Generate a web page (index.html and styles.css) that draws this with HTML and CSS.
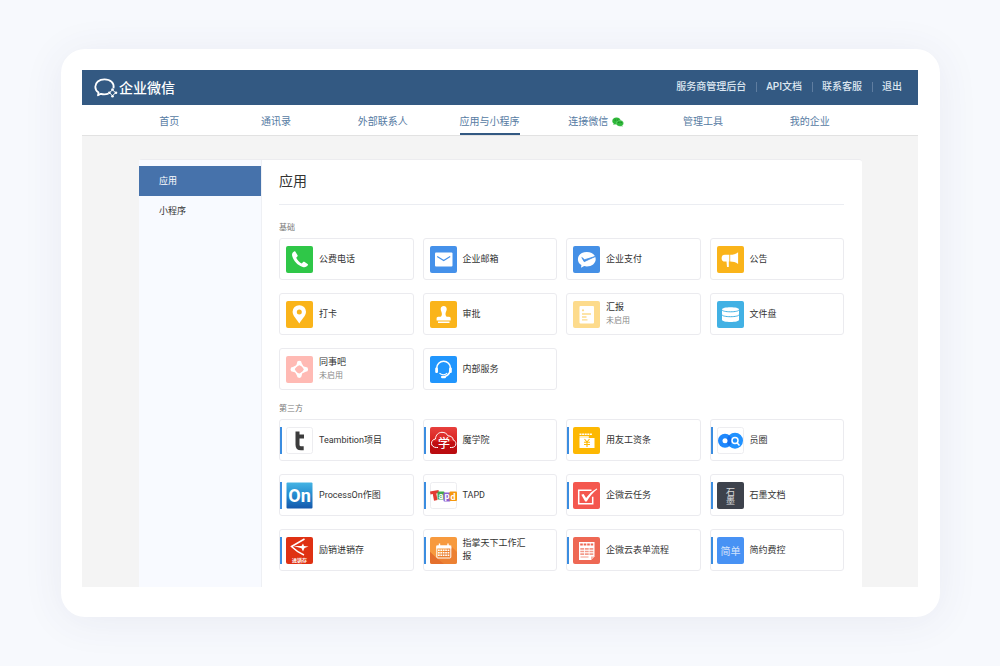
FILE: index.html
```html
<!DOCTYPE html>
<html lang="zh-CN">
<head>
    <meta charset="utf-8">
    <meta name="viewport" content="width=device-width, initial-scale=1">
    <title>企业微信</title>
    <link rel="stylesheet" href="styles.css">
</head>
<body>
    <div class="frame">
        <header class="topbar">
            <a class="brand" href="#">
                <svg class="brand-icon" viewBox="0 0 24 20" fill="none" stroke="#fff" stroke-width="1.8">
                    <path d="M19.500 10.200C20.600 5 16.500 1.300 10.500 1.300 5 1.300 1.300 4.600 1.300 8.800c0 2.400 1.200 4.400 3.200 5.800L4 17.300l3-1.500c2.300.7 5 .6 7.500-.2" stroke-linejoin="round"/>
                    <path d="M18.500 11.800l3 3-3 3-3-3z" stroke-width="1"/>
                    <g fill="#fff" stroke="none">
                        <circle cx="18.500" cy="11.500" r="1.300"/>
                        <circle cx="22" cy="14.800" r="1.300"/>
                        <circle cx="18.500" cy="18.200" r="1.300"/>
                        <circle cx="15.300" cy="14.800" r="1.300"/>
                    </g>
                </svg>
                <span>企业微信</span>
            </a>
            <div class="top-links">
                <a href="#">服务商管理后台</a>
                <a href="#">API文档</a>
                <a href="#">联系客服</a>
                <a href="#">退出</a>
            </div>
        </header>

        <nav class="nav">
            <a href="#">首页</a>
            <a href="#">通讯录</a>
            <a href="#">外部联系人</a>
            <a href="#" class="active">应用与小程序</a>
            <a href="#">连接微信
                <svg class="wechat" viewBox="0 0 12 10">
                    <path d="M4.500.5C2 .5.300 2 .300 4c0 1.100.5 2 1.400 2.600L1.400 8l1.600-.8c.5.100 1 .2 1.500.2 2.500 0 4.300-1.500 4.300-3.400S7 .5 4.500.5z" fill="#2fb83a"/>
                    <path d="M8 3.300c-2.100 0-3.700 1.300-3.700 3s1.600 3 3.700 3c.4 0 .8 0 1.200-.2l1.300.7-.3-1.200c.8-.5 1.300-1.300 1.300-2.300 0-1.700-1.500-3-3.500-3z" fill="#2fb83a" stroke="#c5edc8" stroke-width=".3"/>
                    <g fill="#14601c">
                        <circle cx="3.200" cy="3" r=".5"/>
                        <circle cx="5.900" cy="3" r=".5"/>
                        <circle cx="6.900" cy="5.600" r=".5"/>
                        <circle cx="9.100" cy="5.600" r=".5"/>
                    </g>
                </svg>
            </a>
            <a href="#">管理工具</a>
            <a href="#">我的企业</a>
        </nav>

        <div class="content">
            <div class="panel">
                <aside class="sidebar">
                    <a href="#" class="current">应用</a>
                    <a href="#">小程序</a>
                </aside>

                <main class="main">
                    <h1>应用</h1>

                    <h2>基础</h2>
                    <div class="apps">
                        <a class="app" href="#">
                            <svg class="icon" viewBox="0 0 27 27">
                                <rect width="27" height="27" rx="2" fill="#2fc748"/>
                                <path d="M8.200 5.400c-1.600.8-2.600 2.400-2 4.700 1.300 5 5.600 9.500 10.600 11 2.300.6 4.200-.3 5.100-2 .2-.5.100-.9-.3-1.200l-3.300-2.100c-.4-.3-.9-.2-1.200.2l-1.300 1.500c-2.700-1.300-4.400-3.300-5.600-5.800l1.200-1.300c.3-.3.400-.7.200-1.100L9.400 5.800c-.2-.5-.7-.6-1.200-.4z" fill="#fff"/>
                            </svg>
                            <span class="name">公费电话</span>
                        </a>
                        <a class="app" href="#">
                            <svg class="icon" viewBox="0 0 27 27">
                                <rect width="27" height="27" rx="2" fill="#4591ea"/>
                                <rect x="5" y="6.500" width="17.500" height="14" rx="1" fill="#fff"/>
                                <path d="M7.200 10.500l6.500 4 6.500-4" fill="none" stroke="#4591ea" stroke-width="1.200"/>
                            </svg>
                            <span class="name">企业邮箱</span>
                        </a>
                        <a class="app" href="#">
                            <svg class="icon" viewBox="0 0 27 27">
                                <rect width="27" height="27" rx="2" fill="#4590e6"/>
                                <path d="M13.800 6C8.700 6 4.900 9.100 4.900 13.200c0 2.500 1.300 4.600 3.500 5.900L8 21.700l3.200-1.600c.8.200 1.700.3 2.600.3 5 0 8.900-3.100 8.900-7.200S18.800 6 13.800 6z" fill="#fff"/>
                                <path d="M8.800 11.500l2.400 4.200 11-5.200-10.600 3.200z" fill="#4590e6" stroke="#4590e6" stroke-width=".8"/>
                            </svg>
                            <span class="name">企业支付</span>
                        </a>
                        <a class="app" href="#">
                            <svg class="icon" viewBox="0 0 27 27">
                                <rect width="27" height="27" rx="2" fill="#fab41a"/>
                                <path d="M12.300 8.800H8a3.200 3.200 0 0 0 0 6.800h1.500l.5 5.300h1.800v-5.300h.5zM13.200 8.800c3-.1 5.500-.8 7.900-2.600v11.900c-2.400-1.800-4.900-2.400-7.900-2.500z" fill="#fff"/>
                            </svg>
                            <span class="name">公告</span>
                        </a>
                        <a class="app" href="#">
                            <svg class="icon" viewBox="0 0 27 27">
                                <rect width="27" height="27" rx="2" fill="#fab41a"/>
                                <path d="M13.300 4.200a6.600 6.600 0 0 0-6.700 6.600c0 4.200 4.300 7.500 6.700 11.800 2.400-4.300 6.700-7.600 6.700-11.800a6.600 6.600 0 0 0-6.700-6.600zm0 4.200a2.500 2.500 0 1 1 0 5 2.500 2.500 0 0 1 0-5z" fill="#fff" fill-rule="evenodd"/>
                            </svg>
                            <span class="name">打卡</span>
                        </a>
                        <a class="app" href="#">
                            <svg class="icon" viewBox="0 0 27 27">
                                <rect width="27" height="27" rx="2" fill="#fab41a"/>
                                <path d="M13.700 5c-2 0-3.200 1.500-3 3.400.2 1.700 1.300 2.800 1.200 4.800-.1 1.700-.8 2.500-2.300 2.600H8.200c-1 0-1.600.7-1.600 1.700v2h14.100v-2c0-1-.6-1.700-1.600-1.700h-1.400c-1.400-.1-2.100-.9-2.200-2.600-.1-2 1-3.100 1.200-4.800.2-1.900-1-3.400-3-3.400zM8 20.600h11.500v1.400H8z" fill="#fff"/>
                            </svg>
                            <span class="name">审批</span>
                        </a>
                        <a class="app" href="#">
                            <svg class="icon" viewBox="0 0 27 27">
                                <rect width="27" height="27" rx="2" fill="#fddb8c"/>
                                <rect x="6.500" y="5" width="14.500" height="17.500" rx="1" fill="#fff"/>
                                <circle cx="10" cy="9.300" r="1.100" fill="#fddb8c"/>
                                <path d="M9 13h9M9 16h4.500M9 18.800h5.500" stroke="#fddb8c" stroke-width="1.300"/>
                            </svg>
                            <span class="name">汇报<small>未启用</small></span>
                        </a>
                        <a class="app" href="#">
                            <svg class="icon" viewBox="0 0 27 27">
                                <rect width="27" height="27" rx="2" fill="#42b1e4"/>
                                <path d="M5 8.500c0-1.300 3.800-2.200 8.500-2.200S22 7.200 22 8.500v10.300c0 1.300-3.800 2.300-8.500 2.300S5 20.100 5 18.800z" fill="#fff"/>
                                <path d="M5 8.800c0 1.200 3.800 2 8.500 2s8.500-.8 8.500-2M5 13.700c0 1.200 3.800 2 8.500 2s8.500-.8 8.500-2" fill="none" stroke="#42b1e4"/>
                            </svg>
                            <span class="name">文件盘</span>
                        </a>
                        <a class="app" href="#">
                            <svg class="icon" viewBox="0 0 27 27">
                                <rect width="27" height="27" rx="2" fill="#ffbab4"/>
                                <path d="M13.300 7.300l6 6-6 6-6-6z" fill="none" stroke="#fff" stroke-width="1.200"/>
                                <path d="M10.900 7.200a2.400 2.400 0 1 1 4.800 0l2 3.500-4.400-1.500-3.500 1.800zM19.700 11a2.400 2.400 0 1 1 0 4.800l-3.200 1.500 1.300-4-1.600-3.200zM15.700 19.500a2.400 2.400 0 1 1-4.800 0l-1.800-3.300 4.200 1.300 3.300-1.700zM6.900 15.800a2.400 2.400 0 1 1 0-4.800l3.400-1.700-1.500 4 1.500 3.500z" fill="#fff"/>
                            </svg>
                            <span class="name">同事吧<small>未启用</small></span>
                        </a>
                        <a class="app" href="#">
                            <svg class="icon" viewBox="0 0 27 27">
                                <rect width="27" height="27" rx="2" fill="#2196fd"/>
                                <path d="M6.700 13.500v-1.300a6.900 6.900 0 0 1 13.800 0v1.300M20 15c-.7 3-2.600 4.900-5.300 5.500" fill="none" stroke="#fff" stroke-width="1.500"/>
                                <rect x="5.200" y="11.500" width="2.800" height="5.500" rx="1.200" fill="#fff"/>
                                <rect x="19" y="11.500" width="2.800" height="5.500" rx="1.200" fill="#fff"/>
                                <path d="M9.500 17.200c1.800 2 5.800 2.200 7.700 0" fill="none" stroke="#fff" stroke-width="1.100"/>
                                <rect x="11" y="19.800" width="5" height="2.500" rx="1.200" fill="#fff"/>
                            </svg>
                            <span class="name">内部服务</span>
                        </a>
                    </div>

                    <h2>第三方</h2>
                    <div class="apps third">
                        <a class="app" href="#">
                            <svg class="icon" viewBox="0 0 27 27">
                                <rect x=".5" y=".5" width="26" height="26" rx="2" fill="#fff" stroke="#ededf0"/>
                                <path d="M11.500 4.500v13.200c0 2.600 1.200 3.500 3.500 3.500h2.700M9.500 9.500h8.500" fill="none" stroke="#3c3c3c" stroke-width="4"/>
                            </svg>
                            <span class="name">Teambition项目</span>
                        </a>
                        <a class="app" href="#">
                            <svg class="icon" viewBox="0 0 27 27">
                                <defs>
                                    <linearGradient id="red" x2="0" y2="1">
                                        <stop stop-color="#e7403d"/>
                                        <stop offset=".5" stop-color="#d92320"/>
                                        <stop offset=".55" stop-color="#c20e10"/>
                                        <stop offset="1" stop-color="#b90b10"/>
                                    </linearGradient>
                                </defs>
                                <rect width="27" height="27" rx="2" fill="url(#red)"/>
                                <path d="M8 20.500H6.500c-2.900 0-5-1.700-5-4.200 0-2.300 1.600-4 4-4.300C5.600 8 8.500 5.300 12 5.300c2.700 0 4.900 1.300 6 3.600 3-.2 5 1.500 5.200 4 1.700.7 2.700 2 2.700 3.700 0 2.400-1.800 3.900-4.300 3.900H20" fill="none" stroke="#fff"/>
                                <text class="glyph-xue" x="14" y="21">学</text>
                            </svg>
                            <span class="name">魔学院</span>
                        </a>
                        <a class="app" href="#">
                            <svg class="icon" viewBox="0 0 27 27">
                                <rect width="27" height="27" rx="2" fill="#fdb802"/>
                                <path d="M6.500 7.200h12.500" stroke="#fff" stroke-width="1.500" stroke-dasharray="2 .6"/>
                                <path d="M6.500 9.300h9.300v1.400H6.500zM6.500 11h15v10h-15z" fill="#fff"/>
                                <path d="M11.500 12l2.500 3 2.500-3M14 15v5M11 15.300h6M11 17.500h6" fill="none" stroke="#fdb802" stroke-width="1.100"/>
                            </svg>
                            <span class="name">用友工资条</span>
                        </a>
                        <a class="app" href="#">
                            <svg class="icon" viewBox="0 0 27 27">
                                <rect x=".5" y=".5" width="26" height="26" rx="2" fill="#fff" stroke="#ededf0"/>
                                <circle cx="8" cy="13.700" r="7" fill="#1f88fc"/>
                                <circle cx="18" cy="13.700" r="8" fill="#2192ff"/>
                                <path d="M12 8.300a8 8 0 0 0 0 11A7 7 0 0 0 12 8.300z" fill="#1570ee"/>
                                <circle cx="8" cy="13.700" r="2.500" fill="#fff"/>
                                <circle cx="18" cy="13.500" r="3" fill="none" stroke="#fff" stroke-width="1.500"/>
                                <path d="M20 15.800l2.500 2.700" stroke="#fff" stroke-width="1.500"/>
                            </svg>
                            <span class="name">员圈</span>
                        </a>
                        <a class="app" href="#">
                            <svg class="icon" viewBox="0 0 27 27">
                                <defs>
                                    <linearGradient id="blue" x2="0" y2="1">
                                        <stop stop-color="#45b4e4"/>
                                        <stop offset=".5" stop-color="#2389ce"/>
                                        <stop offset="1" stop-color="#1557ab"/>
                                    </linearGradient>
                                </defs>
                                <rect x=".5" y=".5" width="26" height="26" rx="1" fill="url(#blue)"/>
                                <text class="glyph-on" x="13.500" y="20">On</text>
                            </svg>
                            <span class="name">ProcessOn作图</span>
                        </a>
                        <a class="app" href="#">
                            <svg class="icon" viewBox="0 0 27 27">
                                <rect x=".5" y=".5" width="26" height="26" rx="2" fill="#fff" stroke="#ededf0"/>
                                <path d="M0 9.500l8.500-1.500.5 3-2.700.5 1.200 6.500-3.500.7-1.200-6.700-2.300.5z" fill="#e23b32"/>
                                <rect x="7.500" y="9.500" width="7" height="8" rx="1" fill="#43a84d"/>
                                <rect x="13.500" y="10.500" width="7" height="9" rx="1" fill="#8b61d4"/>
                                <rect x="19.500" y="9.500" width="7.500" height="9.500" rx="1" fill="#f6980e"/>
                                <g class="glyph-tapd">
                                    <text x="11" y="16.500">a</text>
                                    <text x="17" y="17">p</text>
                                    <text x="23" y="17.500">d</text>
                                </g>
                            </svg>
                            <span class="name">TAPD</span>
                        </a>
                        <a class="app" href="#">
                            <svg class="icon" viewBox="0 0 27 27">
                                <rect width="27" height="27" rx="2" fill="#f4574e"/>
                                <path d="M18.500 8.200H5.700v13.500h14v-7" fill="none" stroke="#fff" stroke-width="1.500"/>
                                <path d="M8.300 12.700l2.300-.8 2.500 4.200c3-4.300 6.200-7.400 10.600-9.700l.6.800c-4.300 3.100-7.800 7.200-10.600 12.300h-1.500z" fill="#fff"/>
                            </svg>
                            <span class="name">企微云任务</span>
                        </a>
                        <a class="app" href="#">
                            <svg class="icon" viewBox="0 0 27 27">
                                <rect width="27" height="27" rx="2" fill="#3d424c"/>
                                <g class="glyph-ink">
                                    <text x="13.500" y="12.500">石</text>
                                    <text x="13.500" y="22">墨</text>
                                </g>
                            </svg>
                            <span class="name">石墨文档</span>
                        </a>
                        <a class="app" href="#">
                            <svg class="icon" viewBox="0 0 27 27">
                                <rect width="27" height="27" rx="2" fill="#df3113"/>
                                <path d="M18.500 2L5.500 9.500c3 3 7 6 12.500 8.500" fill="none" stroke="#fff" stroke-width="1.500"/>
                                <path d="M7.500 9h8l1.500-2.500 1 2.500 4.500.5-4 1.500-1.500 3.500-1.500-3.200z" fill="#fff"/>
                                <text class="glyph-stock" x="13.500" y="25">进销存</text>
                            </svg>
                            <span class="name">励销进销存</span>
                        </a>
                        <a class="app" href="#">
                            <svg class="icon" viewBox="0 0 27 27">
                                <rect width="27" height="27" rx="2" fill="#f79a3e"/>
                                <path d="M6.500 21L0 14.800V25a2 2 0 0 0 2 2h17l2-5.500z" fill="#e46f2c"/>
                                <path d="M20.500 8.500L27 15v10a2 2 0 0 1-2 2H14l-7.500-6z" fill="#ec8133"/>
                                <path d="M6.300 8.500h15v3h-15z" fill="#fff"/>
                                <rect x="6.800" y="9" width="14" height="12" rx="1" fill="none" stroke="#fff"/>
                                <path d="M9.500 6.500v3M18 6.500v3" stroke="#fff" stroke-width="1.400"/>
                                <path d="M8 13.300h12M8 15.800h12M8 18.300h12" stroke="#fff" stroke-width="1.600" stroke-dasharray="1.700 .7"/>
                            </svg>
                            <span class="name">指掌天下工作汇报</span>
                        </a>
                        <a class="app" href="#">
                            <svg class="icon" viewBox="0 0 27 27">
                                <rect width="27" height="27" rx="2" fill="#ee6854"/>
                                <path d="M6 5h15.500v14.500L18 23H6z" fill="#fff"/>
                                <path d="M7.200 7.500h13" stroke="#ee6854" stroke-width="2.200" stroke-dasharray="2.600 .9"/>
                                <path d="M7.300 11.800h13M7.300 14.500h13M7.300 17.200h13" stroke="#f39a8b" stroke-width="1.700" stroke-dasharray="3.800 .8"/>
                                <path d="M7.500 20h8" stroke="#f39a8b"/>
                                <path d="M18 23v-3.500h3.500z" fill="#f8b7ac"/>
                            </svg>
                            <span class="name">企微云表单流程</span>
                        </a>
                        <a class="app" href="#">
                            <svg class="icon" viewBox="0 0 27 27">
                                <rect width="27" height="27" rx="2" fill="#4892f4"/>
                                <text class="glyph-simple" x="13.500" y="17.500">简单</text>
                            </svg>
                            <span class="name">简约费控</span>
                        </a>
                    </div>
                </main>
            </div>
        </div>
    </div>
</body>
</html>
```
FILE: styles.css
```css
* {
    box-sizing: border-box;
}

body {
    margin: 0;
    min-height: 100vh;
    padding: 49px 60px 49px 61px;
    background: #f7f9fd;
    color: #333;
    font-family: Roboto, "Noto Sans CJK SC", sans-serif;
    font-size: 10px;
    line-height: 14px;
}

a {
    color: inherit;
    text-decoration: none;
}

.frame {
    padding: 21px 22px 30px 21px;
    background: #fff;
    border-radius: 24px;
    box-shadow: 0 4px 40px rgba(60, 70, 110, 0.08);
}

/* top bar */
.topbar {
    display: flex;
    align-items: center;
    justify-content: space-between;
    height: 35px;
    padding: 0 16px 0 12px;
    background: #335982;
    color: #fff;
}

.brand {
    display: flex;
    align-items: center;
    gap: 1px;
    font-size: 14px;
    font-weight: 500;
}

.brand-icon {
    width: 24px;
    height: 20px;
}

.top-links {
    display: flex;
    padding-bottom: 2px;
    color: #dce6f0;
    font-weight: 500;
}

.top-links a + a {
    margin-left: 10px;
    padding-left: 10px;
    background: linear-gradient(#5f7da0, #5f7da0) left center / 1px 10px no-repeat;
}

/* navigation */
.nav {
    display: flex;
    height: 31px;
    padding: 0 55px 0 34px;
    border-bottom: 1px solid #e2e2e2;
    color: #567ba3;
}

.nav a {
    display: flex;
    flex: 1;
    align-items: center;
    justify-content: center;
    gap: 4px;
    position: relative;
    padding-top: 4px;
}

.nav .active::after {
    content: "";
    position: absolute;
    bottom: 0;
    width: 60px;
    height: 2px;
    background: #335982;
}

.wechat {
    width: 12px;
    height: 10px;
}

/* page */
.content {
    padding: 23px 56px 0 57px;
    background: #f4f4f4;
}

.panel {
    display: flex;
    background: #fff;
    border-top: 1px solid #ececef;
    border-radius: 3px 3px 0 0;
}

.sidebar {
    width: 123px;
    padding-top: 6px;
    background: #f8faff;
    border-right: 1px solid #eef0f4;
    font-size: 9px;
}

.sidebar a {
    display: block;
    padding-left: 20px;
    line-height: 30px;
}

.sidebar .current {
    background: #4672ab;
    color: #fff;
}

.main {
    flex: 1;
    padding: 0 18px 16px 17px;
}

h1 {
    margin: 0 0 16px;
    padding: 11px 0 13px;
    border-bottom: 1px solid #ebedf2;
    font-size: 14px;
    font-weight: normal;
    line-height: 20px;
}

h2 {
    margin: 0 0 3px;
    color: #777;
    font-size: 8px;
    font-weight: normal;
    line-height: 14px;
}

.apps {
    display: grid;
    grid-template-columns: repeat(4, 1fr);
    grid-auto-rows: 42px;
    gap: 13px 9px;
}

.apps + h2 {
    margin-top: 12px;
}

.app {
    display: flex;
    align-items: center;
    gap: 6px;
    position: relative;
    padding: 0 24px 0 6px;
    border: 1px solid #ebebef;
    border-radius: 3px;
    font-size: 9px;
    line-height: 13px;
}

.third .app::before {
    content: "";
    position: absolute;
    left: 0;
    width: 2px;
    height: 27px;
    background: #3b8de0;
}

.icon {
    flex: none;
    width: 27px;
    height: 27px;
}

.name small {
    display: block;
    color: #888;
    font-size: 8px;
}

/* lettering inside the app icons */
.icon text {
    fill: #fff;
    text-anchor: middle;
}

.glyph-xue {
    font-size: 12px;
    font-weight: 500;
}

.glyph-on {
    font-size: 18px;
    font-weight: bold;
}

.glyph-tapd {
    font-size: 9px;
    font-weight: bold;
}

.glyph-ink {
    font-size: 9px;
    opacity: 0.8;
}

.glyph-stock {
    font-size: 5px;
    font-weight: bold;
}

.glyph-simple {
    font-size: 10px;
    opacity: 0.75;
}
```
